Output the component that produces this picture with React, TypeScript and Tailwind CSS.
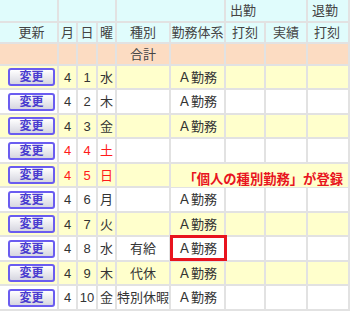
import React from 'react';

type Row = {
  m: number;
  d: number;
  w: string;
  kind: string;
  sys: string;
  red?: boolean;
};

const rows: Row[] = [
  { m: 4, d: 1, w: '水', kind: '', sys: 'Ａ勤務' },
  { m: 4, d: 2, w: '木', kind: '', sys: 'Ａ勤務' },
  { m: 4, d: 3, w: '金', kind: '', sys: 'Ａ勤務' },
  { m: 4, d: 4, w: '土', kind: '', sys: '', red: true },
  { m: 4, d: 5, w: '日', kind: '', sys: '', red: true },
  { m: 4, d: 6, w: '月', kind: '', sys: 'Ａ勤務' },
  { m: 4, d: 7, w: '火', kind: '', sys: 'Ａ勤務' },
  { m: 4, d: 8, w: '水', kind: '有給', sys: 'Ａ勤務' },
  { m: 4, d: 9, w: '木', kind: '代休', sys: 'Ａ勤務' },
  { m: 4, d: 10, w: '金', kind: '特別休暇', sys: 'Ａ勤務' },
];

const head = 'bg-[#e0fcfc] flex items-center justify-center text-[#444]';
const sum = 'bg-[#fcdcc2] flex items-center justify-center text-[#444]';

export default function App() {
  return (
    <div className="relative w-[350px] h-[311px] bg-white font-['Liberation_Sans','Noto_Sans_CJK_JP',sans-serif] text-[13px] leading-none text-[#333]">
      <div className="grid grid-cols-[57px_17px_18px_17px_52px_53px_38px_40px_40px] grid-rows-[21px_19px_20px_22px_23px_22px_23px_22px_23px_22px_23px_22px_23px] gap-[2px] bg-[#e2e2e2] pr-[2px] pb-[2px] w-[350px] h-[311px]">
        {/* header row 1 */}
        <div className={head} />
        <div className={`${head} col-span-3`} />
        <div className={`${head} col-span-2`} />
        <div className={`${head} col-span-2 !justify-start pl-[4px]`}>出勤</div>
        <div className={`${head} !justify-start pl-[4px]`}>退勤</div>

        {/* header row 2 */}
        <div className={`${head} pl-[6px]`}>更新</div>
        <div className={head}>月</div>
        <div className={head}>日</div>
        <div className={head}>曜</div>
        <div className={head}>種別</div>
        <div className={`${head} whitespace-nowrap`}>勤務体系</div>
        <div className={head}>打刻</div>
        <div className={head}>実績</div>
        <div className={`${head} pr-[2px]`}>打刻</div>

        {/* totals */}
        <div className={sum} />
        <div className={sum} />
        <div className={sum} />
        <div className={sum} />
        <div className={sum}>合計</div>
        <div className={sum} />
        <div className={sum} />
        <div className={sum} />
        <div className={sum} />

        {rows.map((r, i) => {
          const bg = i % 2 === 0 ? 'bg-[#ffffcc]' : 'bg-white';
          const cell = `${bg} flex items-center justify-center whitespace-nowrap`;
          const tone = r.red ? 'text-[#ff1a1a]' : '';
          return (
            <React.Fragment key={r.d}>
              <div className={`${bg} flex items-center pl-[8px]`}>
                <button className="w-[47px] h-[18px] border-2 border-[#6a5cf0] rounded-[3px] bg-gradient-to-b from-white to-[#d6d6e0] text-[12px] font-bold text-[#4a3ccf] leading-none">
                  変更
                </button>
              </div>
              <div className={`${cell} ${tone}`}>{r.m}</div>
              <div className={`${cell} ${tone}`}>{r.d}</div>
              <div className={`${cell} ${tone}`}>{r.w}</div>
              <div className={cell}>{r.kind}</div>
              <div className={cell}>{r.sys}</div>
              <div className={cell} />
              <div className={cell} />
              <div className={cell} />
            </React.Fragment>
          );
        })}
      </div>

      {/* annotation */}
      <div className="absolute left-[171px] top-[164px] w-[177px] h-[23px] bg-[#ffffcc] flex items-end justify-end pr-[5px] pb-[2px] text-[13.3px] font-bold text-[#e8141e] font-['Noto_Sans_CJK_JP',sans-serif] whitespace-nowrap">
        「個人の種別勤務」が登録
      </div>

      {/* highlight box */}
      <div className="absolute left-[170px] top-[235px] w-[57px] h-[26px] border-[3.5px] border-[#e8141e]" />
    </div>
  );
}
